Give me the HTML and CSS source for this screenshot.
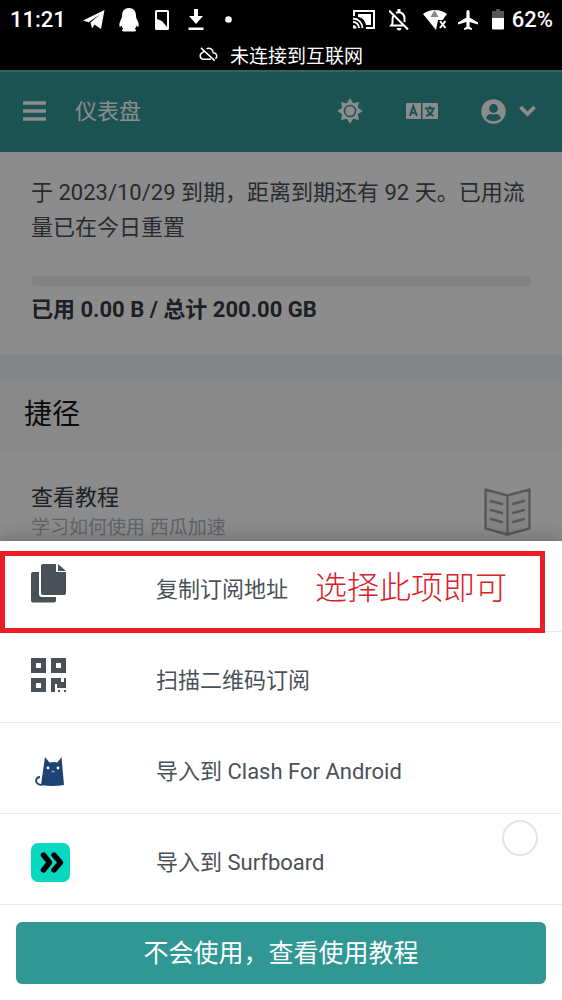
FILE: index.html
```html
<!DOCTYPE html>
<html lang="zh-CN">
<head>
<meta charset="utf-8">
<meta name="viewport" content="width=device-width, initial-scale=1">
<title>仪表盘</title>
<link rel="stylesheet" href="styles.css">
</head>
<body>
<header class="status">
  <div class="status-row">
    <span class="clock">11:21</span>
    <div class="status-left">
      <svg width="22" height="20" viewBox="0 0 22 20"><path fill="#fff" d="M0 10.5 21.5 0 18 19 11.500 14.500 9 18.500 7.500 12.500 17 4.500 5.500 12.200Z"/></svg>
      <svg width="20" height="24" viewBox="0 0 20 24"><path fill="#fff" d="M10 0c4.500 0 7 3 7 7.500 0 1.500.3 2.500 1 4 1.500 3 2 5 1.500 6.800-.3 1-1 .8-2-.8-.4 1.500-.9 2.500-1.700 3.500 1 .5 1.400 1 1.200 1.800-.2.700-1.400.7-3 .7H6c-1.600 0-2.800 0-3-.7-.2-.8.2-1.300 1.200-1.800-.8-1-1.300-2-1.700-3.500-1 1.600-1.700 1.800-2 .8C0 16.500.500 14.500 2 11.500c.7-1.500 1-2.500 1-4C3 3 5.500 0 10 0Z"/></svg>
      <svg class="sim" width="14" height="20" viewBox="0 0 14 20"><path fill="#fff" fill-rule="evenodd" d="M1.500 0h11Q14 0 14 1.500v17q0 1.500-1.500 1.500h-11Q0 20 0 18.500v-17Q0 0 1.500 0ZM2 2v7l5 2 5 6V2Z"/></svg>
      <svg width="16" height="21" viewBox="0 0 16 21"><path fill="#fff" d="M6 0h4v7h5l-7 8-7-8h5ZM.5 18.500h15V21H.5Z"/></svg>
      <svg class="dot" width="7" height="7" viewBox="0 0 7 7"><circle cx="3.500" cy="3.500" r="3.300" fill="#fff"/></svg>
    </div>
    <div class="status-right">
      <svg width="22" height="19" viewBox="0 0 22 19" fill="none" stroke="#fff"><path stroke-width="2" d="M1 6V1h20v17h-8"/><path fill="#fff" stroke="none" d="M5 4h13v11h-5C12 10 9 7.500 5 7Z"/><path stroke-width="1.800" d="M0 8.500A9.500 9.500 0 0 1 9.500 18M0 12a6 6 0 0 1 6 6"/><path fill="#fff" stroke="none" d="M0 15a3.500 3.500 0 0 1 3.500 3.500H0Z"/></svg>
      <svg width="20" height="22" viewBox="0 0 20 22" fill="none" stroke="#fff" stroke-width="2"><path d="m0 1.500 19 19M4 7c-.7 3-.5 5-.5 7.500L2 16.500h12M7 3.800c4-1.800 8.500.7 8.500 5.200v4"/><path fill="#fff" stroke="none" d="M8.500 0h3v4h-3ZM7.500 19h5q-.5 2.500-2.500 2.500T7.500 19Z"/></svg>
      <svg width="24" height="20" viewBox="0 0 24 20"><path fill="#fff" d="M0 4C7-1.300 17-1.300 24 4l-4.500 6H15l-2 10Z"/><path fill="#888" d="m11.500 0 4 7h-8Z"/><path stroke="#fff" stroke-width="2" d="m17 11 5.500 7M22.500 11 17 18"/></svg>
      <svg width="20" height="20" viewBox="0 0 20 20"><path fill="#fff" d="M10 0q1.600 0 1.600 2v5.500l8.400 5v2l-8.400-2.500v4.700L14 18.500V20l-4-1-4 1v-1.500l2.400-1.800V12L0 14.500v-2l8.400-5V2Q8.400 0 10 0Z"/></svg>
      <svg width="12" height="21" viewBox="0 0 12 21"><path fill="#555" d="M4 0h4v2h4v7H0V2h4Z"/><path fill="#fff" d="M0 9h12v10.500q0 1-1 1H1q-1 0-1-1Z"/></svg>
    </div>
    <span class="level">62%</span>
  </div>
  <div class="offline">
    <svg width="19" height="16" viewBox="0 0 20 16" fill="none" stroke="#fff" stroke-width="1.600"><path d="M2 1.500 16.500 15M12.500 13.500H5C.5 13.500-.2 7.500 4.500 6c.2-.7.600-1.200 1.200-1.800M8 2.500c3.500-1.500 6.500.5 7 4.200 4 .3 4.800 4.500 2.200 6.100"/></svg>
    <span>未连接到互联网</span>
  </div>
</header>
<div class="screen">
  <nav class="navbar">
    <button class="icon-btn" aria-label="菜单"><svg width="23" height="20" viewBox="0 0 23 20"><path stroke="#fff" stroke-width="3.400" d="M0 2h23M0 10h23M0 18h23"/></svg></button>
    <h1 class="nav-title">仪表盘</h1>
    <div class="nav-actions">
      <button class="icon-btn" aria-label="主题"><svg width="26" height="26" viewBox="-13 -13 26 26"><path fill="#fff" fill-rule="evenodd" d="m0-12.800 3.200 5 5.800-1.200-1.200 5.800 5 3.200-5 3.200L9 9 3.200 7.800 0 12.800-3.200 7.800-9 9l1.200-5.800-5-3.200 5-3.200L-9-9l5.800 1.200ZM0-6.300A6.300 6.300 0 1 0 0 6.300 6.300 6.300 0 1 0 0-6.300Z"/><circle r="4.800" fill="#fff"/></svg></button>
      <button class="icon-btn" aria-label="语言"><svg width="32" height="16" viewBox="0 0 32 16"><path fill="#fff" d="M1 0h14v16H1q-1 0-1-1V1q0-1 1-1ZM16.500 0H31q1 0 1 1v14q0 1-1 1H16.500Z"/><path fill="none" stroke="#319795" stroke-width="1.900" d="M4 13 7.300 3 10.800 13M5 9.700h5M19 5.500h10M24 3v2.500M27 6c-.5 3-3.500 6-7 7M21.500 7c1 3 3 4.500 6 6"/></svg></button>
      <button class="icon-btn account" aria-label="账户"><svg width="25" height="25" viewBox="0 0 25 25"><circle cx="12.500" cy="12.500" r="12.200" fill="#fff"/><circle cx="12.500" cy="9.500" r="4.400" fill="#319795"/><path fill="#319795" d="M5 19q1.500-4 5-4 2.500 1 5 0 3.500 0 5 4-3 3.300-7.500 3.300T5 19Z"/></svg><svg width="17" height="12" viewBox="0 0 17 12"><path fill="none" stroke="#fff" stroke-width="3.800" d="m1.500 2 7 7 7-7"/></svg></button>
    </div>
  </nav>
  <main>
    <section class="plan">
      <p class="plan-text">于 2023/10/29 到期，距离到期还有 92 天。已用流量已在今日重置</p>
      <div class="meter" role="progressbar" aria-label="已用流量" aria-valuenow="0"></div>
      <p class="usage">已用 0.00 B / 总计 200.00 GB</p>
    </section>
    <section class="shortcuts">
      <h2 class="shortcuts-title">捷径</h2>
      <a class="shortcut" href="#">
        <span><span class="shortcut-name">查看教程</span><span class="shortcut-note">学习如何使用 西瓜加速</span></span>
        <svg width="47" height="48" viewBox="0 0 47 48" fill="#f0f0f1" stroke="#a0a1a4" stroke-width="2.400" stroke-linejoin="round" stroke-linecap="round"><path d="m1.500 1.500 22 6 22-6v39l-22 6-22-6ZM23.500 7.500v39"/><path fill="none" d="m7 13 11 3M7 22l11 3M7 31l11 3M40 13l-11 3M40 22l-11 3M40 31l-11 3"/></svg>
      </a>
    </section>
  </main>
  <div class="backdrop"></div>
  <div class="sheet" role="dialog" aria-label="订阅">
    <button class="option"><svg width="48" height="48" viewBox="0 0 48 48" fill="#495057"><path d="M12 1h13v8h10v21q0 2-2 2H12q-2 0-2-2V3q0-2 2-2ZM27 1l8 7H27ZM2 9h6v22q0 3 3 3h14v3.500q0 2-2 2H2q-2 0-2-2V11q0-2 2-2Z"/></svg>复制订阅地址</button>
    <button class="option"><svg width="48" height="48" viewBox="0 0 48 48" fill="#495057"><path fill-rule="evenodd" d="M0 4h15v15H0ZM5 9v5h5V9ZM20 4h15v15H20ZM25 9v5h5V9ZM0 24h15v14H0ZM5 29v5h5v-5ZM20 24h10v4h3v-4h2v10h-9v-4h-2v8h-4ZM27 36h2v2h-2ZM33 36h2v2h-2Z"/></svg>扫描二维码订阅</button>
    <button class="option"><svg width="48" height="48" viewBox="0 0 48 48"><path fill="#1e4373" d="m14 12 4.500 5.500q5-.8 8 0L30.500 12l2.500 28q-12 2-23 0Z"/><path fill="none" stroke="#1e4373" stroke-width="1.800" d="M12 39.500C7 41 4 37 5.500 34q1-2 3.500-2"/><circle cx="17" cy="23" r="1.400" fill="#fff"/><circle cx="27" cy="23" r="1.400" fill="#fff"/><path fill="none" stroke="#fff" stroke-width=".8" d="m20.500 27 1.500-1 1.500 1"/></svg>导入到 Clash For Android</button>
    <button class="option"><svg width="48" height="48" viewBox="0 0 48 48"><rect y="7" width="39" height="39" rx="7" fill="#08d8c0"/><path fill="none" stroke="#000" stroke-width="5.400" stroke-linecap="round" stroke-linejoin="round" d="m12.500 19 6 7.500-6 7.500M23 19l6.500 7.500L23 34"/></svg>导入到 Surfboard</button>
    <div class="sheet-foot"><button class="help">不会使用，查看使用教程</button></div>
    <div class="note">选择此项即可</div>
    <div class="touch"></div>
  </div>
</div>
</body>
</html>
```
FILE: styles.css
```css
* { box-sizing: border-box; }
body {
  margin: 0;
  min-height: 100vh;
  display: flex;
  flex-direction: column;
  font-family: Roboto, "Noto Sans CJK SC", sans-serif;
  font-size: 22px;
  color: #495057;
}
h1, h2, p { margin: 0; font-weight: 400; }
button { border: 0; padding: 0; background: none; font: inherit; color: inherit; }
svg { display: block; flex: none; }

.status { height: 70px; background: #000; color: #fff; }
.status-row {
  display: flex;
  align-items: center;
  height: 39px;
  padding: 0 9px 0 10px;
}
.clock { font-weight: 500; line-height: 39px; }
.status-left { display: flex; align-items: center; gap: 14px; margin-left: 17px; }
.sim { margin: 0 5px 0 2px; }
.dot { margin-left: 7px; }
.status-right { display: flex; align-items: center; gap: 14px; margin-left: auto; }
.status-right svg:nth-child(3) { margin-right: -3px; }
.level { margin-left: 8px; font-weight: 500; }
.offline {
  display: flex;
  align-items: center;
  justify-content: center;
  gap: 12px;
  height: 30px;
  font-size: 19px;
}

.screen {
  position: relative;
  flex: 1;
  overflow: hidden;
  background: #f0f2f8;
}
.navbar {
  display: flex;
  align-items: center;
  height: 82px;
  padding: 0 26px 2px 23px;
  border-top: 2px solid #59b5b2;
  background: #319795;
  color: #fff;
}
.nav-title { margin-left: 29px; padding-bottom: 4px; font-size: 22px; }
.nav-actions { display: flex; align-items: center; gap: 43px; margin-left: auto; }
.account { display: flex; align-items: center; gap: 13px; }

.plan { padding: 23px 31px 26px; background: #fff; }
.plan-text { line-height: 35px; }
.meter { height: 10px; margin-top: 31px; border-radius: 5px; background: #ededef; }
.usage { margin-top: 6px; line-height: 36px; font-weight: 700; color: #343a40; }
.shortcuts { margin-top: 25px; border-radius: 6px; background: #fff; overflow: hidden; }
.shortcuts-title {
  padding: 0 24px;
  background: #f9f9f9;
  color: #171717;
  font-size: 28px;
  line-height: 71px;
}
.shortcut {
  display: flex;
  align-items: center;
  justify-content: space-between;
  padding: 32px 31px;
  color: #343a40;
  text-decoration: none;
}
.shortcut-name { display: block; line-height: 32px; }
.shortcut-note { display: block; font-size: 19px; line-height: 28px; color: #adb5bd; }

.backdrop { position: absolute; inset: 0; background: rgba(0, 0, 0, .45); }
.sheet {
  position: absolute;
  right: 0;
  bottom: 0;
  left: 0;
  background: #fff;
  box-shadow: 0 -2px 16px rgba(0, 0, 0, .25);
}
.option {
  display: flex;
  align-items: center;
  gap: 77px;
  width: 100%;
  height: 91px;
  padding: 1px 31px 0;
  border-bottom: 1px solid #e6e8ea;
  text-align: left;
}
.sheet-foot { padding: 17px 16px 16px; }
.help {
  width: 100%;
  height: 62px;
  padding-bottom: 4px;
  border-radius: 6px;
  background: #319795;
  color: #fff;
  font-size: 25px;
}
.note {
  position: absolute;
  top: 10px;
  right: 17px;
  left: 0;
  height: 82px;
  padding-left: 310px;
  border: 5px solid #ea1f26;
  color: #dc2027;
  font-size: 32px;
  font-weight: 300;
  line-height: 64px;
}
.touch {
  position: absolute;
  right: 24px;
  bottom: 144px;
  width: 36px;
  height: 36px;
  border: 2px solid #e3e2f2;
  border-radius: 50%;
}
```
